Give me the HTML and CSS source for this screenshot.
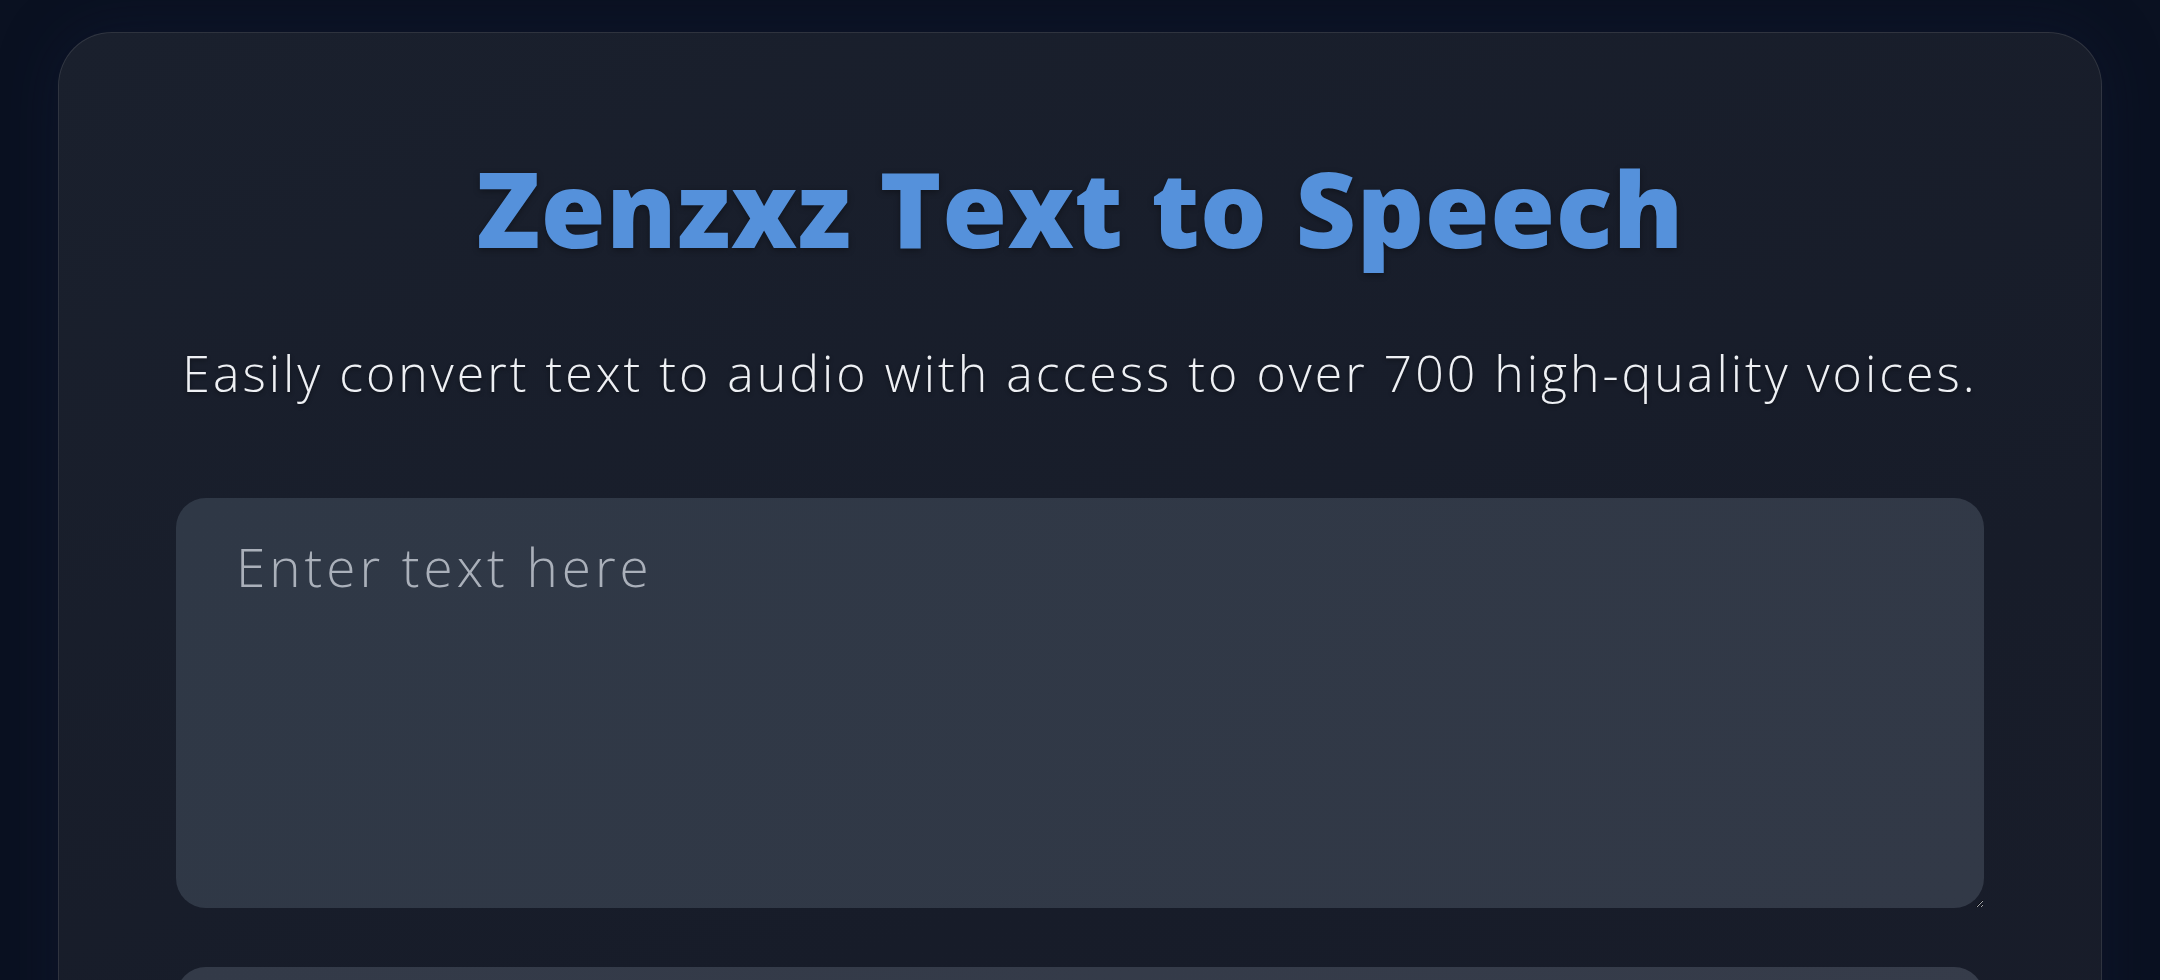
FILE: index.html
```html
<!DOCTYPE html>
<html lang="en">
<head>
<meta charset="utf-8">
<title>Zenzxz Text to Speech</title>
<link rel="stylesheet" href="styles.css">
</head>
<body>
  <main class="card">
    <h1 class="title">Zenzxz Text to Speech</h1>
    <p class="subtitle">Easily convert text to audio with access to over 700 high-quality voices.</p>
    <textarea class="text-input" placeholder="Enter text here"></textarea>
    <div class="voice-select"></div>
    <div class="action-row"></div>
  </main>
</body>
</html>
```

FILE: styles.css
```css
html, body {
  margin: 0;
  padding: 0;
}

body {
  background: #0a1121;
  padding: 32px 58px 0;
  font-family: "Open Sans", "Liberation Sans", sans-serif;
  overflow: hidden;
}

.card {
  display: flex;
  flex-direction: column;
  background: linear-gradient(160deg, #1a202d 0%, #171c29 60%, #191d2a 100%);
  border: 1px solid rgba(255, 255, 255, 0.1);
  border-radius: 54px;
  padding: 112px 117px 80px;
  box-shadow: 0 0 60px rgba(20, 30, 60, 0.35);
}

.title {
  margin: 0;
  text-align: center;
  font-family: "Open Sans", "Liberation Sans", sans-serif;
  font-weight: 800;
  font-size: 105px;
  line-height: 126px;
  letter-spacing: 0.6px;
  color: #5591db;
  text-shadow: 0 2px 6px rgba(0, 0, 0, 0.35);
}

.subtitle {
  margin: 66px 0 0;
  text-align: center;
  font-weight: 300;
  font-size: 50px;
  line-height: 72px;
  letter-spacing: 3px;
  color: #eef0f4;
  text-shadow: 0 2px 4px rgba(0, 0, 0, 0.4);
}

.text-input {
  display: block;
  box-sizing: border-box;
  margin-top: 89px;
  width: 100%;
  height: 410px;
  padding: 33px 60px;
  border: none;
  border-radius: 30px;
  background: linear-gradient(135deg, #2f3846 0%, #323947 100%);
  font-family: "Open Sans", "Liberation Sans", sans-serif;
  font-weight: 300;
  font-size: 53px;
  line-height: 72px;
  letter-spacing: 4px;
  color: #e6e9ee;
  resize: vertical;
  outline: none;
}

.text-input::placeholder {
  color: #aab0ba;
}

.voice-select {
  margin-top: 59px;
  height: 120px;
  border-radius: 30px;
  background: linear-gradient(135deg, #333a48 0%, #363c4a 100%);
}

.action-row {
  margin-top: 40px;
  height: 120px;
  border-radius: 30px;
  background: #2f3846;
}
```
